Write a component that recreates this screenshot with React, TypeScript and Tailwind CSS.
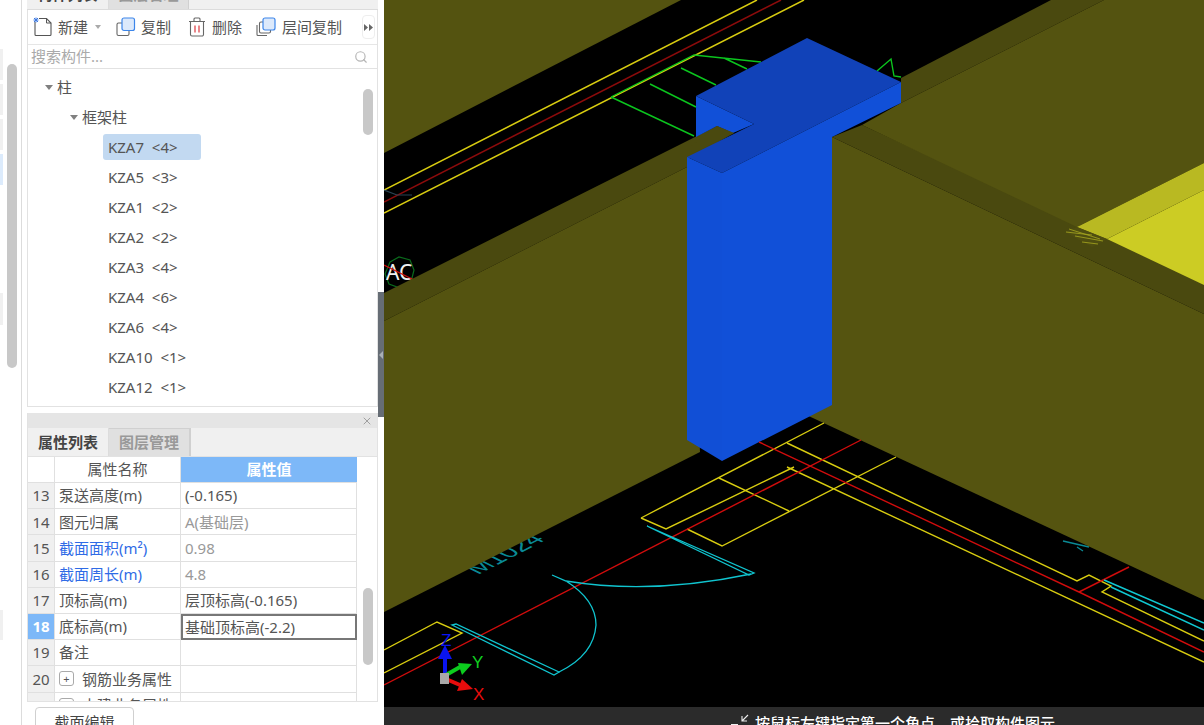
import React from "react";
import { Search, X } from "lucide-react";

const items = ["KZA7  <4>", "KZA5  <3>", "KZA1  <2>", "KZA2  <2>", "KZA3  <4>", "KZA4  <6>", "KZA6  <4>", "KZA10  <1>", "KZA12  <1>"];

type Row = { n: number; name: React.ReactNode; value?: string; blue?: boolean; gray?: boolean; sel?: boolean; plus?: boolean };
const rows: Row[] = [
  { n: 13, name: "泵送高度(m)", value: "(-0.165)" },
  { n: 14, name: "图元归属", value: "A(基础层)", gray: true },
  { n: 15, name: "截面面积(m²)", value: "0.98", gray: true, blue: true },
  { n: 16, name: "截面周长(m)", value: "4.8", gray: true, blue: true },
  { n: 17, name: "顶标高(m)", value: "层顶标高(-0.165)" },
  { n: 18, name: "底标高(m)", value: "基础顶标高(-2.2)", sel: true },
  { n: 19, name: "备注" },
  { n: 20, name: "钢筋业务属性", plus: true },
  { n: 21, name: "土建业务属性", plus: true },
];

function NewIcon() {
  return (
    <svg width="20" height="20" viewBox="0 0 20 20" fill="none">
      <path d="M2 5v12.5a1 1 0 0 0 1 1h14a1 1 0 0 0 1-1V6l-4.5-4.5H6" stroke="#555" strokeWidth="1.1" />
      <path d="M13.5 1.5V6H18" stroke="#555" strokeWidth="1" />
      <path d="M1 1l4 4M5 1L1 5M3 .5v5M.5 3h5" stroke="#3c78e0" strokeWidth="1" />
    </svg>
  );
}
function CopyIcon() {
  return (
    <svg width="20" height="20" viewBox="0 0 20 20" fill="none">
      <rect x="1" y="6" width="12" height="12.5" rx="1.5" stroke="#666" strokeWidth="1.1" />
      <rect x="6" y="1" width="12.5" height="12.5" rx="2" fill="#dce9fb" stroke="#3d86ea" strokeWidth="1.2" />
    </svg>
  );
}
function TrashIcon() {
  return (
    <svg width="18" height="20" viewBox="0 0 18 20" fill="none">
      <path d="M2.5 5v12.5a1.5 1.5 0 0 0 1.5 1.5h10a1.5 1.5 0 0 0 1.5-1.5V5" stroke="#666" strokeWidth="1.1" />
      <path d="M1 4.5h16M6 4.5V2a1 1 0 0 1 1-1h4a1 1 0 0 1 1 1v2.5" stroke="#666" strokeWidth="1.1" />
      <path d="M7 8.5v7M11 8.5v7" stroke="#e0545a" strokeWidth="1.4" />
    </svg>
  );
}
function LayerCopyIcon() {
  return (
    <svg width="20" height="20" viewBox="0 0 20 20" fill="none">
      <path d="M1 8v9.5a1 1 0 0 0 1 1h9" stroke="#666" strokeWidth="1.1" />
      <rect x="3.5" y="5" width="11" height="11" rx="1.5" stroke="#666" strokeWidth="1.1" />
      <rect x="7" y="1" width="12" height="12" rx="2" fill="#dce9fb" stroke="#3d86ea" strokeWidth="1.2" />
    </svg>
  );
}
function Caret() {
  return <span className="w-0 h-0 border-x-[4px] border-x-transparent border-t-[5px] border-t-[#808080]" />;
}

function Scene() {
  const o = "#545310";
  const d = "#4a490f";
  return (
    <svg className="block w-full flex-1 min-h-0" viewBox="384 0 820 707" fill="none">
      <rect x="384" y="0" width="820" height="707" fill="#000" />
      {/* plan lines, upper band */}
      <path d="M384 190L757 0M384 213L804 0" stroke="#d8cc10" strokeWidth="1.5" />
      <path d="M384 202L781 0" stroke="#8c0b0b" strokeWidth="1.5" />
      <path d="M384 190L397 195H412" stroke="#2b4454" strokeWidth="1.2" />
      <path d="M611 97L694 55L761 62M724 58L747 69M611 97L694 136M650 84L696 107M681 68L716 85M877 71L891 59L894 76L901 77" stroke="#0bc51e" strokeWidth="1.4" />
      <polygon points="390,262 399,257 410,260 414,270 411,282 400,288 389,284 385,274" stroke="#0a6b1c" strokeWidth="1.2" />
      <text x="386" y="280" fill="#f0f0f0" fontSize="21" fontFamily="Noto Sans, sans-serif">AC</text>
      <path d="M384 265L414 280" stroke="#d01010" strokeWidth="1.2" />

      {/* text under the wall */}
      <text transform="matrix(0.89 -0.46 0.89 0.44 478 575)" fontSize="25" fill="#0a8a95" fontFamily="Liberation Sans, sans-serif">M1024</text>
      <path d="M1063 541L1089 547M1077 547L1083 551" stroke="#0a8a95" strokeWidth="1.3" />

      {/* walls and slabs */}
      <polygon points="384,0 681,0 384,153" fill={o} />
      <polygon points="384,293 717,126 734,133 687,160 687,167 384,321" fill={d} />
      <polygon points="384,321 687,167 700,452 384,612" fill={o} />
      <polygon points="832,137 1204,314 1204,600 800,412" fill="#555410" />
      <polygon points="832,137 862,125 1204,283 1204,314" fill={d} />
      <polygon points="901,78 1051,0 1104,0 901,103" fill={d} />
      <polygon points="901,103 1104,0 1204,0 1204,163 1077,227 862,125" fill={o} />
      <polygon points="1077,227 1204,163 1204,190 1107,239" fill="#b9b922" />
      <polygon points="1107,239 1204,190 1204,285" fill="#cccc24" />
      <polygon points="1077,227 1107,239 1092,247 1065,232" fill="#4f4e10" />
      <path d="M1066 232L1092 235M1069 229L1100 239M1075 236L1103 241M1082 242L1098 244" stroke="#a8a820" strokeWidth=".8" />

      {/* blue column */}
      <polygon points="696,96 754,124 733,133 717,126 696,137" fill="#1150d8" />
      <polygon points="717,126 734,133 687,157 687,149" fill={d} />
      <polygon points="807,38 901,82 722,173 687,157 754,124 696,96" fill="#1142b8" />
      <polygon points="722,173 901,82 901,103 832,137 832,405 722,461" fill="#1150d8" />
      <polygon points="687,157 722,173 722,461 687,440" fill="#114fd6" />

      {/* plan lines, lower band */}
      <path d="M641 518L824 423M641 518L666 529L794 467M787 443L1077 581L1089 575L1111 586L1102 592L1204 641M687 529L722 546L896 457M719 478L789 511M787 467L1204 662" stroke="#d8cc10" strokeWidth="1.4" />
      <path d="M384 685L861 440M759 442L1079 592L1204 652M1079 592L1129 567" stroke="#d00c0c" strokeWidth="1.4" />
      <path d="M1104 580L1204 623M1111 587L1204 630" stroke="#10c8d2" strokeWidth="1.5" />
      <path d="M384 650L437 622L462 633L384 673" stroke="#d8cc10" strokeWidth="1.4" />
      <path d="M647 526L754 573L749 575L651 528ZM452 625L554 675L559 672L456 624Z" stroke="#10c4cf" strokeWidth="1.3" />
      <path d="M751 574Q651 595 566 581L552 575M566 581Q596 600 596 625Q594 655 559 672" stroke="#10c4cf" strokeWidth="1.3" />

      {/* axis widget */}
      <path d="M445 676V655" stroke="#0a14f0" strokeWidth="4" />
      <polygon points="445,645 452,659 438,659" fill="#0a14f0" />
      <path d="M446 675L460 667" stroke="#0ccc1e" strokeWidth="4" />
      <polygon points="472,664 458,663 462,675" fill="#0ccc1e" />
      <path d="M446 679L460 685" stroke="#e80c0c" strokeWidth="4" />
      <polygon points="473,689 457,691 462,679" fill="#e80c0c" />
      <rect x="440" y="673" width="9" height="11" fill="#a8a8a8" />
      <text x="441" y="646" fontSize="17" fill="#0a14f0" fontFamily="Liberation Sans, sans-serif">Z</text>
      <text x="472" y="668" fontSize="17" fill="#10d020" fontFamily="Liberation Sans, sans-serif">Y</text>
      <text x="473" y="700" fontSize="17" fill="#e80c0c" fontFamily="Liberation Sans, sans-serif">X</text>
    </svg>
  );
}

export default function App() {
  return (
    <div className="flex w-[1204px] h-[725px] overflow-hidden bg-white font-['Noto_Sans','Noto_Sans_CJK_SC',sans-serif] text-[15px] text-[#555]">
      {/* left rail */}
      <div className="relative w-[22px] shrink-0 border-r border-[#dcdcdc] bg-white">
        <div className="flex flex-col gap-[4px] pt-[49px]">
          <div className="w-[3px] h-[31px] bg-[#f0f0f0]" />
          <div className="w-[3px] h-[31px] bg-[#f0f0f0]" />
          <div className="w-[3px] h-[31px] bg-[#f0f0f0]" />
          <div className="w-[3px] h-[31px] bg-[#dcebfc]" />
        </div>
        <div className="absolute left-0 top-[293px] w-[3px] h-[32px] bg-[#f0f0f0]" />
        <div className="absolute left-0 top-[610px] w-[3px] h-[30px] bg-[#f0f0f0]" />
        <div className="absolute left-[7px] top-[64px] w-[10px] h-[304px] rounded-full bg-[#c8c8c8]" />
      </div>

      {/* panels */}
      <div className="w-[356px] h-[725px] shrink-0 pl-[5px] flex flex-col bg-white overflow-hidden">
        <div className="w-[351px] h-[10px] shrink-0 flex overflow-hidden bg-[#f0f0f0] border-b border-[#dcdcdc]">
          <div className="w-[82px] h-[30px] -mt-[21px] flex items-center justify-center font-bold text-[#444] border-r border-[#dcdcdc]">构件列表</div>
          <div className="w-[80px] h-[30px] -mt-[21px] flex items-center justify-center font-bold text-[#999] bg-[#e0e0e0] border-r border-[#d0d0d0]">图层管理</div>
        </div>
        <div className="w-[351px] shrink-0 flex flex-col border-x border-b border-[#e2e2e2] h-[397px]">
          <div className="flex items-center h-[35px] shrink-0 border-b border-[#e6e6e6] pl-[5px] relative">
            <NewIcon />
            <span className="ml-[5px]">新建</span>
            <span className="ml-[7px] w-0 h-0 border-x-[3px] border-x-transparent border-t-[4px] border-t-[#aaa]" />
            <span className="ml-[15px]"><CopyIcon /></span>
            <span className="ml-[5px]">复制</span>
            <span className="ml-[17px]"><TrashIcon /></span>
            <span className="ml-[6px]">删除</span>
            <span className="ml-[14px]"><LayerCopyIcon /></span>
            <span className="ml-[6px]">层间复制</span>
            <span className="absolute left-[334px] top-[5px] w-[13px] h-[24px] rounded border border-[#eee] flex items-center justify-center">
              <svg width="9" height="7" viewBox="0 0 9 7"><path d="M0 0L4 3.5L0 7ZM5 0L9 3.5L5 7Z" fill="#666" /></svg>
            </span>
          </div>
          <div className="flex items-center justify-between h-[24px] shrink-0 border-b border-[#e2e2e2] pl-[3px] pr-[9px] text-[#aaa]">
            <span>搜索构件...</span>
            <Search size={14} color="#b5b5b5" strokeWidth={2} />
          </div>
          <div className="relative flex-1 min-h-0 overflow-hidden pt-[3px]">
            <div className="h-[30px] flex items-center pl-[17px] gap-[4px]"><Caret /><span>柱</span></div>
            <div className="h-[30px] flex items-center pl-[42px] gap-[4px]"><Caret /><span>框架柱</span></div>
            {items.map((t, i) => (
              <div key={t} className="h-[30px] flex items-center pl-[75px]">
                <span className={(i === 0 ? "bg-[#c2d9f1] w-[98px] " : "") + "h-[26px] flex items-center pl-[5px] rounded-[3px] whitespace-pre"}>{t}</span>
              </div>
            ))}
            <div className="absolute left-[335px] top-[20px] w-[10px] h-[46px] rounded-full bg-[#c8c8c8]" />
          </div>
        </div>

        <div className="w-[351px] h-[6px] shrink-0" />
        <div className="w-[351px] h-[289px] shrink-0 flex flex-col border-x border-b border-[#e2e2e2] overflow-hidden">
          <div className="h-[15px] shrink-0 bg-[#e5e5e5] flex items-center justify-end pr-[4px]">
            <X size={12} color="#a0a0a0" />
          </div>
          <div className="h-[29px] shrink-0 flex bg-[#f0f0f0] border-b border-[#e2e2e2]">
            <div className="w-[81px] flex items-center justify-center font-bold text-[#444] border-r border-[#dcdcdc]">属性列表</div>
            <div className="w-[82px] flex items-center justify-center font-bold text-[#999] bg-[#e0e0e0] border-r-2 border-t border-[#d0d0d0]">图层管理</div>
          </div>
          <div className="relative flex-1 min-h-0 overflow-hidden">
            <div className="grid grid-cols-[27px_126px_176px] grid-rows-[26px] auto-rows-[26.2px]">
              <div className="border-r border-b border-[#e0e0e0]" />
              <div className="flex items-center justify-center border-r border-b border-[#e0e0e0]">属性名称</div>
              <div className="flex items-center justify-center font-bold text-white bg-[#7db8f8] border-b border-[#e0e0e0]">属性值</div>
              {rows.map((r) => (
                <React.Fragment key={r.n}>
                  <div className={(r.sel ? "bg-[#7db8f8] text-white font-bold " : "bg-[#f0f0f0] ") + "flex items-center justify-center border-r border-b border-[#e0e0e0]"}>{r.n}</div>
                  <div className={(r.blue ? "text-[#2f6be6] " : "") + "flex items-center pl-[4px] border-r border-b border-[#e0e0e0]"}>
                    {r.plus && (
                      <span className="w-[15px] h-[15px] mr-[8px] border border-[#aaa] rounded-[3px] flex items-center justify-center text-[11px] leading-none">+</span>
                    )}
                    {r.name}
                  </div>
                  <div className={(r.sel ? "border-2 border-[#777] pl-[2px] " : "border-r border-b border-[#e0e0e0] pl-[4px] ") + (r.gray ? "text-[#999] " : "") + "flex items-center"}>{r.value}</div>
                </React.Fragment>
              ))}
            </div>
            <div className="absolute left-[335px] top-[131px] w-[10px] h-[77px] rounded-full bg-[#c8c8c8]" />
          </div>
        </div>
        <div className="mt-[5px] ml-[8px] w-[99px] h-[30px] shrink-0 border border-[#d0d0d0] rounded-t-[4px] flex items-center justify-center text-[#444]">截面编辑</div>
      </div>

      {/* splitter */}
      <div className="w-[6px] shrink-0 bg-white flex flex-col">
        <div className="h-[292px]" />
        <div className="h-[125px] bg-[#666d75] flex items-center justify-center">
          <span className="w-0 h-0 border-y-[4px] border-y-transparent border-r-[4px] border-r-[#aab0b6]" />
        </div>
      </div>

      {/* viewport */}
      <div className="flex-1 min-w-0 flex flex-col">
        <Scene />
        <div className="h-[18px] shrink-0 bg-[#2b2b2b] text-white text-[15px] flex items-start pl-[346px] overflow-hidden">
          <svg className="mt-[7px] mr-[5px]" width="20" height="11" viewBox="0 0 20 11" fill="none">
            <path d="M18 1L12 7M12 2V7H17" stroke="#eee" strokeWidth="1.1" />
            <path d="M1 11H8" stroke="#eee" strokeWidth="2" />
          </svg>
          <span className="whitespace-nowrap font-medium leading-[22px] mt-[5px]">按鼠标左键指定第一个角点，或拾取构件图元</span>
        </div>
      </div>
    </div>
  );
}
